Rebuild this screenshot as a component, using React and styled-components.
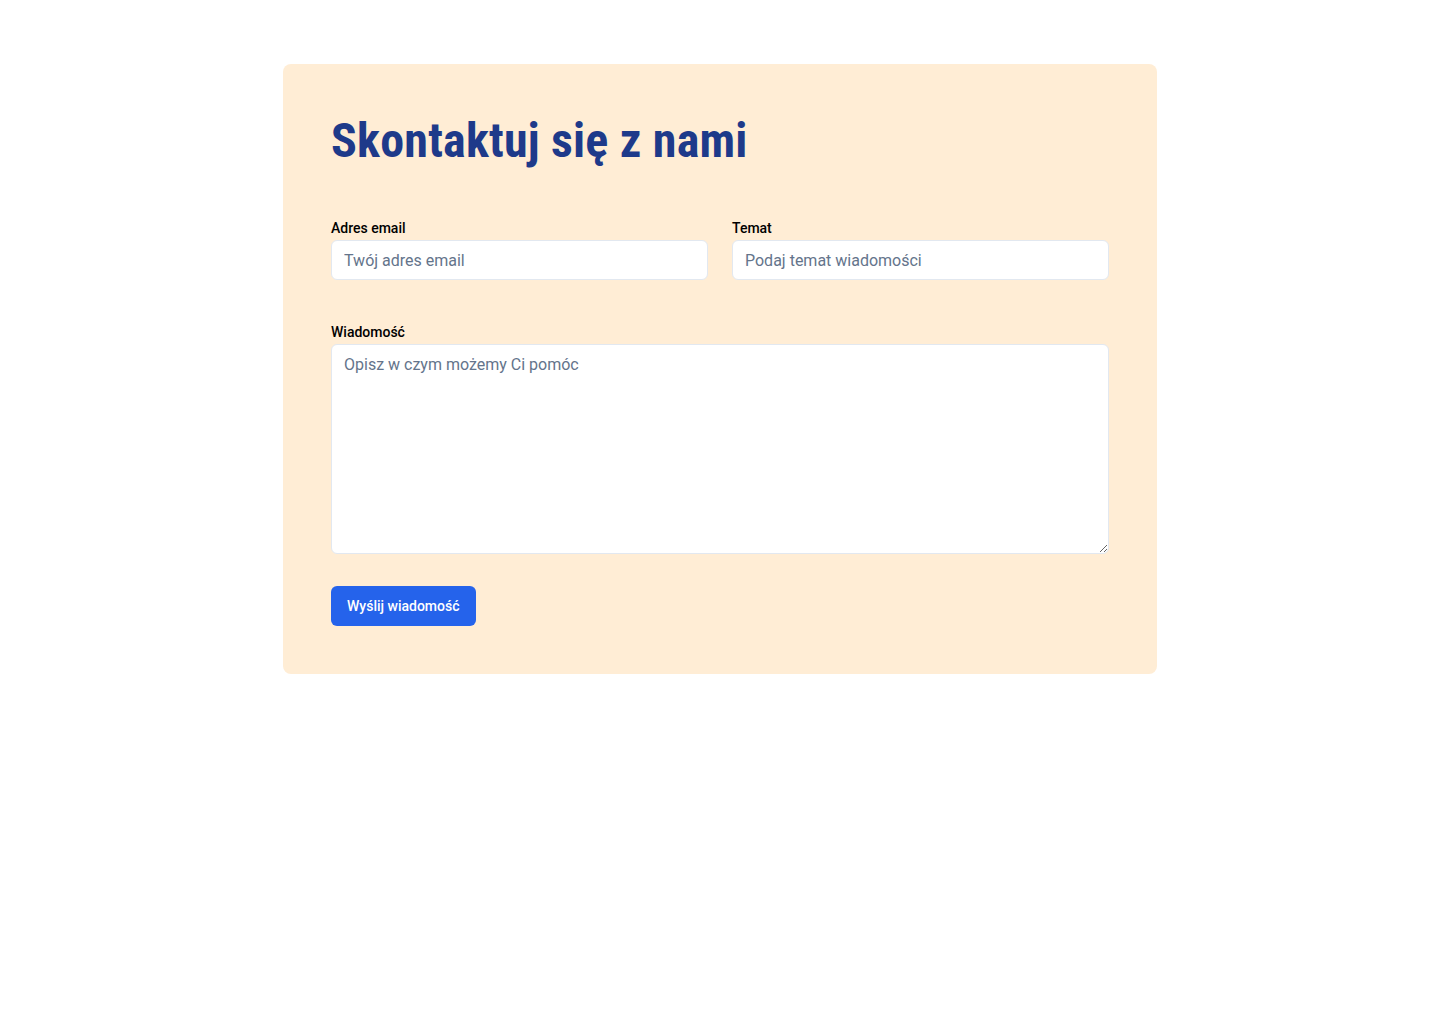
import styled, { createGlobalStyle } from 'styled-components';

const GlobalStyle = createGlobalStyle`
    body{
        margin: 0;
        background: #FFFFFF;
        font-family: Roboto, "Liberation Sans", sans-serif;
    }
    *{
        box-sizing: border-box;
    }
`;

export default function App() {
    return (
        <>
            <GlobalStyle />
            <Card>
                <Title>Skontaktuj się z nami</Title>
                <Row>
                    <Field>
                        <Label>Adres email</Label>
                        <Input type="email" placeholder="Twój adres email" />
                    </Field>
                    <Field>
                        <Label>Temat</Label>
                        <Input type="text" placeholder="Podaj temat wiadomości" />
                    </Field>
                </Row>
                <Field>
                    <Label>Wiadomość</Label>
                    <TextArea placeholder="Opisz w czym możemy Ci pomóc" />
                </Field>
                <SendButton>Wyślij wiadomość</SendButton>
            </Card>
        </>
    );
}

const Card = styled.main`
    width: 874px;
    margin: 64px auto 0 auto;
    padding: 48px;
    background: #FFEDD5;
    border-radius: 8px;
    display: flex;
    flex-direction: column;
    align-items: flex-start;
`;

const Title = styled.h1`
    margin: 0 0 50px 0;
    font-family: "Roboto Condensed", Roboto, sans-serif;
    font-stretch: condensed;
    font-weight: 700;
    font-size: 48px;
    line-height: 58px;
    letter-spacing: 0.2px;
    color: #1E3A8A;
`;

const Row = styled.div`
    width: 100%;
    display: grid;
    grid-template-columns: 1fr 1fr;
    gap: 24px;
    margin-bottom: 44px;
`;

const Field = styled.label`
    width: 100%;
    display: flex;
    flex-direction: column;
`;

const Label = styled.span`
    font-size: 14px;
    line-height: 16px;
    font-weight: 500;
    color: #000000;
    margin-bottom: 4px;
`;

const Input = styled.input`
    height: 40px;
    width: 100%;
    padding: 0 12px;
    font-family: Roboto, sans-serif;
    font-size: 16px;
    color: #1E293B;
    background: #FFFFFF;
    border: 1px solid #E2E8F0;
    border-radius: 6px;
    outline: none;
    &::placeholder{
        color: #64748B;
    }
`;

const TextArea = styled.textarea`
    height: 210px;
    width: 100%;
    padding: 8px 12px;
    font-family: Roboto, sans-serif;
    font-size: 16px;
    line-height: 24px;
    color: #1E293B;
    background: #FFFFFF;
    border: 1px solid #E2E8F0;
    border-radius: 6px;
    outline: none;
    &::placeholder{
        color: #64748B;
    }
`;

const SendButton = styled.button`
    margin-top: 32px;
    height: 40px;
    padding: 0 16px;
    background: #2563EB;
    color: #FFFFFF;
    border: none;
    border-radius: 6px;
    font-family: Roboto, sans-serif;
    font-size: 14px;
    font-weight: 500;
    cursor: pointer;
`;
